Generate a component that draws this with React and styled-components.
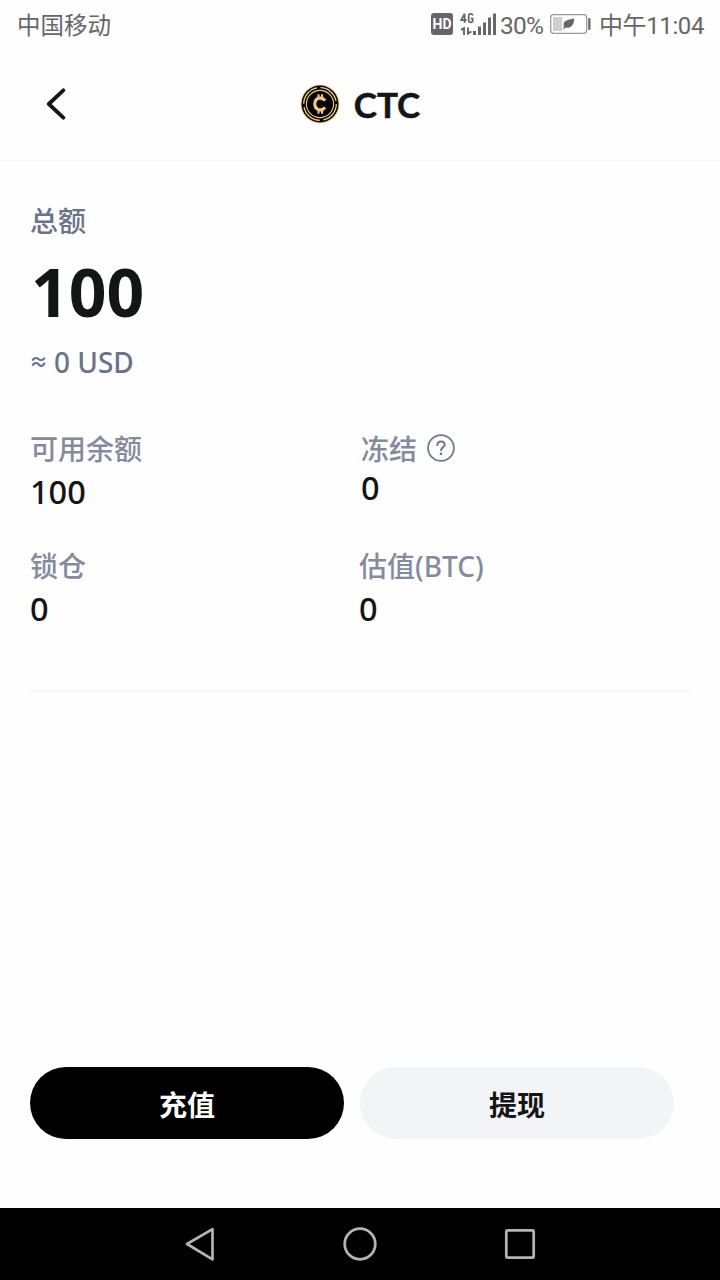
import styled, { createGlobalStyle } from 'styled-components';

const GlobalStyle = createGlobalStyle`
  * {
    box-sizing: border-box;
  }
  body {
    margin: 0;
    background: #fff;
    font-family: 'Noto Sans', 'Noto Sans CJK SC', sans-serif;
  }
`;

const Screen = styled.div`
  display: flex;
  flex-direction: column;
  width: 720px;
  height: 1280px;
  background: #fefefe;
  color: #141517;
`;

const StatusBar = styled.div`
  display: flex;
  align-items: center;
  height: 48px;
  padding: 0 15px 0 17px;
  color: #666;
  font-family: Roboto, 'Noto Sans CJK SC', sans-serif;
  font-size: 24px;
  line-height: 48px;
  white-space: nowrap;
  svg {
    display: block;
    flex: none;
  }
`;

const Carrier = styled.span`
  flex: 1;
  padding-top: 3px;
  font-size: 23.5px;
`;

const Percent = styled.span`
  width: 54px;
  padding: 3px 0 0 4px;
  font-size: 24.5px;
  letter-spacing: -0.8px;
`;

const HdBadge = styled.span`
  width: 22px;
  height: 22px;
  margin-right: 7px;
  border-radius: 3px;
  background: #666;
  color: #fff;
  font-size: 14px;
  font-weight: 700;
  line-height: 23px;
  text-align: center;
`;

const Clock = styled.span`
  width: 114px;
  padding: 3px 0 0 8px;
  font-size: 24px;
  letter-spacing: -0.4px;
`;

const Header = styled.header`
  display: grid;
  grid-template-columns: 120px 1fr 120px;
  align-items: center;
  height: 113px;
  border-bottom: 1px solid #f3f4f5;
`;

const BackButton = styled.button`
  display: flex;
  margin-left: 40px;
  padding: 0;
  border: 0;
  background: none;
`;

const Title = styled.h1`
  display: flex;
  align-items: center;
  justify-content: center;
  gap: 14px;
  margin: 0;
  font-family: Lato, sans-serif;
  font-size: 35px;
  font-weight: 700;
  line-height: 38px;
  -webkit-text-stroke: 0.5px #141517;
`;

const Content = styled.main`
  flex: 1;
  padding: 39px 30px 0;
`;

const Label = styled.div`
  display: flex;
  align-items: center;
  gap: 10px;
  height: 40px;
  padding-top: 1px;
  color: ${(props) => props.$color || '#858b9c'};
  font-size: 28px;
  font-weight: 500;
  line-height: 40px;
  svg {
    margin-bottom: 2px;
  }
`;

const Total = styled.div`
  height: 104px;
  padding-left: 1px;
  font-size: 66px;
  font-weight: 700;
  line-height: 102px;
`;

const Converted = styled.div`
  display: flex;
  height: 36px;
  color: #6c7389;
  font-size: 28px;
  font-weight: 500;
  line-height: 36px;
`;

const Approx = styled.span`
  width: 25px;
  margin-left: -1px;
  font-size: 19px;
  font-weight: 700;
`;

const Balances = styled.div`
  display: grid;
  grid-template-columns: 329px 1fr;
  row-gap: 29px;
  margin-top: 48px;
  padding-bottom: 57px;
  border-bottom: 2px solid #f6f7f9;
`;

const Balance = styled.div`
  height: 88px;
  padding-left: ${(props) => props.$indent || 0}px;
`;

const Amount = styled.div`
  height: 48px;
  margin-top: ${(props) => props.$shift || 0}px;
  font-size: 32.5px;
  font-weight: 500;
  line-height: 48px;
`;

const Actions = styled.div`
  display: flex;
  gap: 16px;
  height: 141px;
  padding: 0 46px 69px 30px;
`;

const ActionButton = styled.button`
  flex: 1;
  height: 72px;
  padding: 1px 0 0;
  border: 0;
  border-radius: 36px;
  background: ${(props) => (props.$primary ? '#000' : '#f3f4f6')};
  color: ${(props) => (props.$primary ? '#fff' : '#141517')};
  font-family: 'Noto Sans CJK SC', sans-serif;
  font-size: 28px;
  font-weight: 700;
  line-height: 40px;
`;

const NavBar = styled.nav`
  display: flex;
  align-items: center;
  justify-content: center;
  gap: 120px;
  height: 72px;
  background: #000;
`;

const SignalIcon = () => (
  <svg width="36" height="26" viewBox="460 11 36 26">
    <g fill="none" stroke="#666" strokeWidth="1.7">
      <path d="M464.6 23v-9.3l-3.4 6.4h5.6" />
      <path d="M472.7 15.6c0-2.4-4-2.4-4 0v5c0 2.4 4 2.4 4 0v-2h-2" />
      <path d="M461 29.8l3-1.7v7M468 27.5v6l3.500-2" strokeWidth="1.9" />
    </g>
    <path
      fill="#666"
      d="M473 31h3v4h-3zM478 26.5h3v8.5h-3zM483 22.5h3V35h-3zM488 17.5h3V35h-3zM493 13.5h3V35h-3z"
    />
  </svg>
);

const BatteryIcon = () => (
  <svg width="41" height="22" viewBox="550 13 41 22">
    <rect x="550.7" y="14.7" width="36" height="18.6" rx="3" fill="#fff" stroke="#999" strokeWidth="1.3" />
    <path fill="#d0d0d0" d="M553 17h9v14h-9z" />
    <path fill="#666" d="M588.2 18.2h2.3v11.6h-2.3z" />
    <path fill="#666" d="M574.2 18.5c-5 .8-10.700 2-10.700 6.200 0 1.300.5 2 .5 2l-1 2.300 1 .3 1.200-1.700c5.500 1.200 9-2.600 9-9.100z" />
  </svg>
);

const BackIcon = () => (
  <svg width="32" height="32" viewBox="0 0 32 32">
    <path
      d="M23.3 2.3L8.800 16l14.500 13.700"
      fill="none"
      stroke="#141517"
      strokeWidth="3.8"
      strokeLinecap="round"
      strokeLinejoin="round"
    />
  </svg>
);

const CoinIcon = () => (
  <svg width="40" height="40" viewBox="0 0 40 40">
    <circle cx="20" cy="20" r="19.5" fill="#efcf99" />
    <circle cx="20" cy="20" r="18.5" fill="#080604" />
    <g fill="none" stroke="#edc98e">
      <circle cx="20" cy="20" r="16.3" strokeWidth="1.3" strokeDasharray="22 3.6" />
      <circle cx="20" cy="20" r="13.6" strokeWidth="1.1" />
      <path d="M25 16.6c-3.6-4.800-10.200-2.300-10.200 3.400s6.600 8.200 10.200 3.400" strokeWidth="3.2" />
      <path d="M18.500 10.300v4M22 10.300v4M18.500 25.700v4M22 25.700v4" strokeWidth="2" />
    </g>
  </svg>
);

const HelpIcon = () => (
  <svg width="28" height="28" viewBox="0 0 28 28">
    <g fill="none" stroke="#737a8f" strokeLinecap="round">
      <circle cx="14" cy="14" r="12.9" strokeWidth="1.8" />
      <path d="M10.300 11.100c.2-4.800 7.600-4.500 7.400-.4-.1 2.700-3.600 2.700-3.600 5.500" strokeWidth="2" />
    </g>
    <circle cx="14" cy="19.9" r="1.4" fill="#737a8f" />
  </svg>
);

const App = () => {
  return (
    <>
      <GlobalStyle />
      <Screen>
        <StatusBar>
          <Carrier>中国移动</Carrier>
          <HdBadge>HD</HdBadge>
          <SignalIcon />
          <Percent>30%</Percent>
          <BatteryIcon />
          <Clock>中午11:04</Clock>
        </StatusBar>
        <Header>
          <BackButton aria-label="返回">
            <BackIcon />
          </BackButton>
          <Title>
            <CoinIcon />
            CTC
          </Title>
        </Header>
        <Content>
          <Label $color="#6c7389">总额</Label>
          <Total>100</Total>
          <Converted>
            <Approx>≈</Approx> 0 USD
          </Converted>
          <Balances>
            <Balance>
              <Label>可用余额</Label>
              <Amount>100</Amount>
            </Balance>
            <Balance $indent={2}>
              <Label>
                冻结
                <HelpIcon />
              </Label>
              <Amount $shift={-4}>0</Amount>
            </Balance>
            <Balance>
              <Label>锁仓</Label>
              <Amount>0</Amount>
            </Balance>
            <Balance>
              <Label>估值(BTC)</Label>
              <Amount>0</Amount>
            </Balance>
          </Balances>
        </Content>
        <Actions>
          <ActionButton $primary>充值</ActionButton>
          <ActionButton>提现</ActionButton>
        </Actions>
        <NavBar>
          <svg width="40" height="40" viewBox="0 0 40 40" fill="none" stroke="#b4b4b4" strokeWidth="2.7" strokeLinejoin="round">
            <path d="M32.5 5.200v30.200L7 20z" />
          </svg>
          <svg width="40" height="40" viewBox="0 0 40 40" fill="none" stroke="#b4b4b4" strokeWidth="2.7">
            <circle cx="20" cy="20" r="15.3" />
          </svg>
          <svg width="40" height="40" viewBox="0 0 40 40" fill="none" stroke="#b4b4b4" strokeWidth="2.7">
            <rect x="6.3" y="6.3" width="27.4" height="27.4" rx="1" />
          </svg>
        </NavBar>
      </Screen>
    </>
  );
};

export default App;
